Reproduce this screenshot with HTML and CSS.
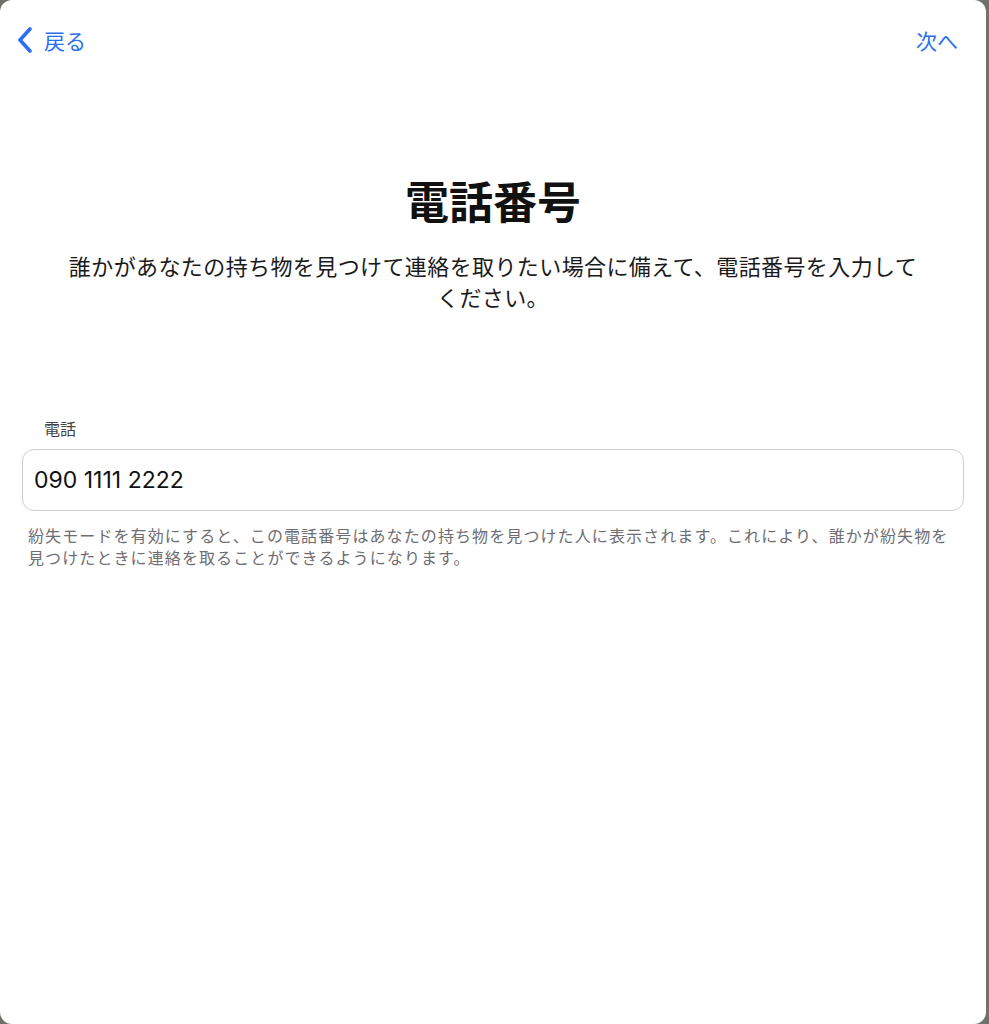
FILE: index.html
```html
<!DOCTYPE html>
<html lang="ja">
<head>
<meta charset="utf-8">
<title>電話番号</title>
<link rel="stylesheet" href="styles.css">
</head>
<body>
<div class="sheet">
  <nav class="nav">
    <a class="nav-back">
      <svg class="chevron" width="16" height="26" viewBox="0 0 16 26"><path d="M13 2 L3 13 L13 24" fill="none" stroke="currentColor" stroke-width="3.6" stroke-linecap="round" stroke-linejoin="round"/></svg>
      <span>戻る</span>
    </a>
    <a class="nav-next">次へ</a>
  </nav>
  <h1 class="title">電話番号</h1>
  <p class="subtitle">誰かがあなたの持ち物を見つけて連絡を取りたい場合に備えて、電話番号を入力してください。</p>
  <div class="field">
    <label class="field-label">電話</label>
    <div class="field-input">090 1111 2222</div>
    <p class="field-note">紛失モードを有効にすると、この電話番号はあなたの持ち物を見つけた人に表示されます。これにより、誰かが紛失物を見つけたときに連絡を取ることができるようになります。</p>
  </div>
</div>
</body>
</html>
```
FILE: styles.css
```css
html, body {
  margin: 0;
  padding: 0;
}
body {
  background: #6f716c;
  width: 989px;
  height: 1024px;
  overflow: hidden;
  font-family: "Noto Sans CJK JP", "Noto Sans", sans-serif;
}
.sheet {
  width: 986px;
  height: 1024px;
  background: #fff;
  border-radius: 12px;
  display: flex;
  flex-direction: column;
}
.nav {
  height: 80px;
  display: flex;
  align-items: center;
  justify-content: space-between;
  padding: 0 28px 0 17px;
  color: #2a6ff0;
  font-size: 21px;
}
.nav-back {
  display: flex;
  align-items: center;
  gap: 11px;
}
.chevron {
  display: block;
}
.title {
  margin: 94px 0 0;
  text-align: center;
  font-size: 44px;
  line-height: 52px;
  font-weight: 700;
  color: #111;
}
.subtitle {
  margin: 24px auto 0;
  width: 862px;
  text-align: center;
  font-size: 22px;
  letter-spacing: 0.4px;
  line-height: 31px;
  color: #1a1a1a;
}
.field {
  margin-top: 106px;
  display: flex;
  flex-direction: column;
}
.field-label {
  margin-left: 44px;
  font-size: 16px;
  line-height: 20px;
  color: #444;
}
.field-input {
  margin: 11px 0 0 22px;
  width: 942px;
  height: 62px;
  box-sizing: border-box;
  border: 1px solid #cfcfcf;
  border-radius: 12px;
  padding: 0 11px;
  display: flex;
  align-items: center;
  font-family: Inter, "Noto Sans", sans-serif;
  font-size: 23px;
  color: #111;
}
.field-note {
  margin: 13px 0 0 28px;
  width: 930px;
  font-size: 16px;
  letter-spacing: 1.1px;
  line-height: 22px;
  color: #6d6d72;
}
```
